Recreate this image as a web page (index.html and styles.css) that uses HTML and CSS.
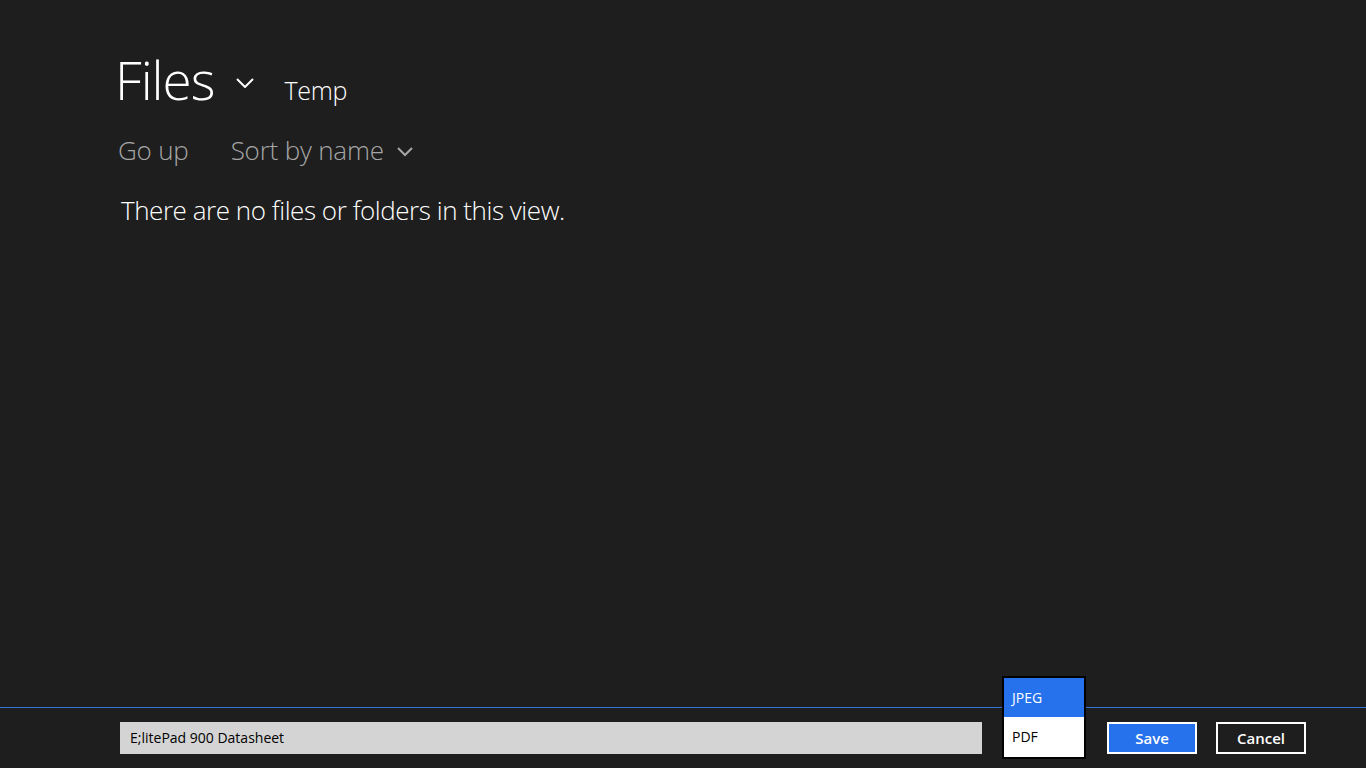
FILE: index.html
```html
<!DOCTYPE html>
<html lang="en">
<head>
  <meta charset="UTF-8">
  <meta name="viewport" content="width=device-width, initial-scale=1.0">
  <title>Files</title>
  <link rel="stylesheet" href="styles.css">
</head>
<body>
  <div class="page">
    <div class="main">
      <div class="header">
        <h1 class="title">Files</h1>
        <svg class="chev-big" width="18" height="10" viewBox="0 0 18 10">
          <polyline points="1,1 9,9 17,1" />
        </svg>
        <span class="folder">Temp</span>
      </div>
      <div class="toolbar">
        <span class="tool">Go up</span>
        <span class="tool sort">Sort by name
          <svg class="chev-small" width="16" height="10" viewBox="0 0 16 10">
            <polyline points="1,1 8,8 15,1" />
          </svg>
        </span>
      </div>
      <p class="empty">There are no files or folders in this view.</p>
    </div>
    <div class="footer">
      <div class="filename">E;litePad 900 Datasheet</div>
      <div class="type-select">
        <!-- opened list sits over the bar -->
        <ul class="type-list">
          <li class="selected">JPEG</li>
          <li>PDF</li>
        </ul>
      </div>
      <button class="btn btn-save">Save</button>
      <button class="btn btn-cancel">Cancel</button>
    </div>
  </div>
</body>
</html>
```
FILE: styles.css
```css
html, body {
  margin: 0;
  padding: 0;
  height: 100%;
  background: #1e1e1e;
  color: #fff;
  font-family: "Open Sans", "Noto Sans", sans-serif;
}
.page {
  display: flex;
  flex-direction: column;
  height: 100vh;
}
.main {
  flex: 1;
  padding: 44px 0 0 115px;
}
.header {
  display: flex;
  align-items: baseline;
}
.title {
  margin: 0;
  font-size: 53px;
  font-weight: 300;
  line-height: 72px;
  letter-spacing: -1px;
}
.chev-big {
  margin-left: 22px;
  align-self: center;
  margin-top: 6px;
}
.chev-big polyline,
.chev-small polyline {
  fill: none;
  stroke: #fff;
  stroke-width: 2;
}
.chev-small polyline {
  stroke: #a6a6a6;
}
.folder {
  margin-left: 30px;
  font-size: 25px;
  font-weight: 300;
  letter-spacing: -0.3px;
}
.toolbar {
  display: flex;
  align-items: center;
  gap: 42px;
  margin-top: 14px;
  padding-left: 3px;
}
.tool {
  font-size: 26px;
  font-weight: 300;
  color: #a6a6a6;
  line-height: 40px;
  letter-spacing: -0.2px;
}
.sort {
  display: flex;
  align-items: center;
}
.chev-small {
  margin-left: 13px;
  margin-top: 4px;
}
.empty {
  margin: 22px 0 0 6px;
  font-size: 26px;
  font-weight: 300;
  letter-spacing: -0.45px;
}
.footer {
  display: flex;
  align-items: flex-start;
  gap: 20px;
  height: 46px;
  padding: 14px 0 0 120px;
  border-top: 1px solid #3274d6;
}
.filename {
  flex: 0 0 852px;
  height: 32px;
  line-height: 32px;
  padding-left: 10px;
  background: #d4d4d4;
  color: #000;
  font-size: 14px;
}
.type-select {
  position: relative;
  width: 84px;
  height: 32px;
  margin-right: 1px;
}
.type-list {
  position: absolute;
  left: 0;
  top: -46px;
  width: 80px;
  margin: 0;
  padding: 0;
  list-style: none;
  border: 2px solid #000;
  background: #fff;
}
.type-list li {
  height: 40px;
  line-height: 40px;
  padding-left: 8px;
  color: #000;
  font-size: 14px;
}
.type-list .selected {
  background: #2672ec;
  color: #fff;
  height: 39px;
  line-height: 39px;
}
.btn {
  width: 90px;
  height: 32px;
  border: 2px solid #fff;
  color: #fff;
  font-family: inherit;
  font-size: 15px;
  font-weight: 600;
  cursor: pointer;
}
.btn-save {
  background: #2672ec;
}
.btn-cancel {
  margin-left: -1px;
  background: #1e1e1e;
}
```
